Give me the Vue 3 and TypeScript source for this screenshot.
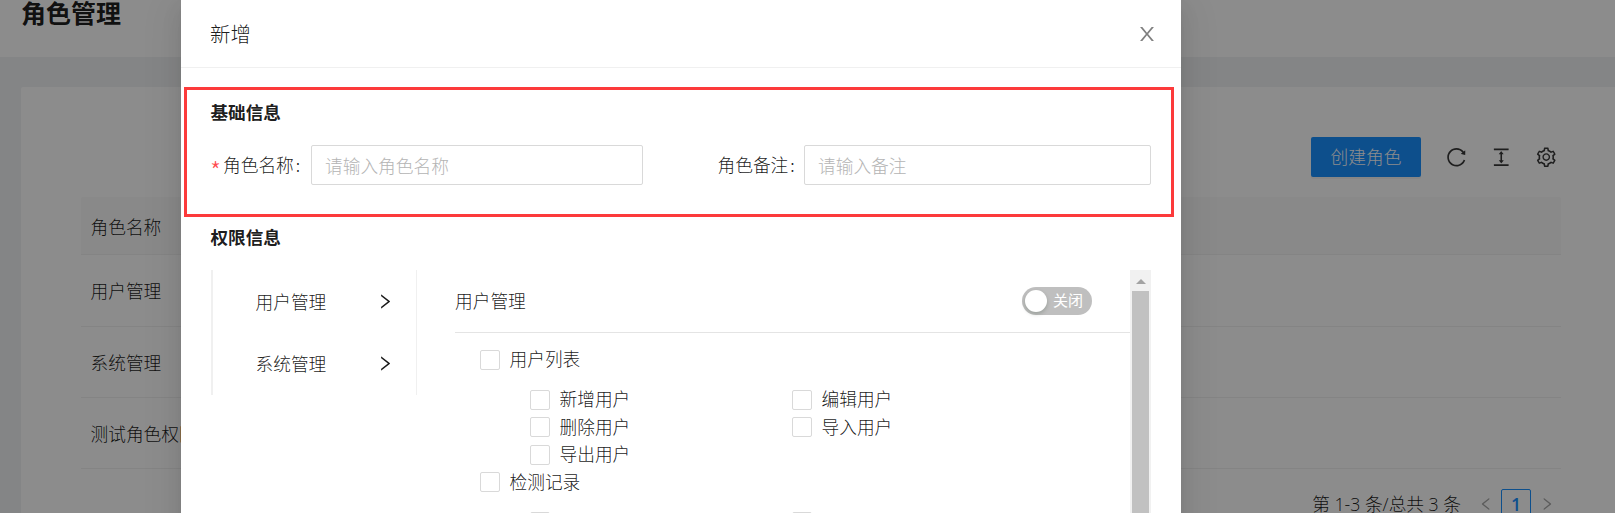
<script setup lang="ts">
import { ref } from 'vue'

interface Permission {
  name: string
  children: string[]
}

const roles = ['用户管理', '系统管理', '测试角色权限']
const menus = ['用户管理', '系统管理']
const permissions: Permission[] = [
  { name: '用户列表', children: ['新增用户', '编辑用户', '删除用户', '导入用户', '导出用户'] },
  { name: '检测记录', children: ['', ''] },
]
const roleName = ref('')
const remark = ref('')

const rightPath =
  'M765.7 486.8L314.9 134.7A7.97 7.97 0 00302 141v77.3c0 4.9 2.3 9.6 6.1 12.6l360 281.1-360 281.1c-3.9 3-6.1 7.7-6.1 12.6V883c0 6.7 7.7 10.4 12.9 6.3l450.8-352.1a31.96 31.96 0 000-50.4z'
const closePath =
  'M563.8 512l262.5-312.9c4.4-5.2.7-13.1-6.1-13.1h-79.8c-4.7 0-9.2 2.1-12.3 5.7L511.6 449.8 295.1 191.7c-3-3.6-7.5-5.7-12.3-5.7H203c-6.8 0-10.5 7.9-6.1 13.1L459.4 512 196.9 824.9A7.95 7.95 0 00203 838h79.8c4.7 0 9.2-2.1 12.3-5.7l216.5-258.1 216.5 258.1c3 3.6 7.5 5.7 12.3 5.7h79.8c6.8 0 10.5-7.9 6.1-13.1L563.8 512z'
const tools = [
  'M909.1 209.3l-56.4 44.1C775.8 155.1 656.2 92 521.9 92 290 92 102.3 279.5 102 511.5 101.7 743.7 289.8 932 521.9 932c181.3 0 335.8-115 394.6-276.1 1.5-4.2-.7-8.9-4.9-10.3l-56.7-19.5a8 8 0 00-10.1 4.8c-1.8 5-3.8 10-5.9 14.9-17.3 41-42.1 77.8-73.7 109.4A344.77 344.77 0 01655.9 829c-42.3 17.9-87.4 27-133.8 27-46.5 0-91.5-9.1-133.8-27A341.5 341.5 0 01279 755.2a342.16 342.16 0 01-73.7-109.4c-17.9-42.4-27-87.4-27-133.9s9.1-91.5 27-133.9c17.3-41 42.1-77.8 73.7-109.4 31.6-31.6 68.4-56.4 109.3-73.8 42.3-17.9 87.4-27 133.8-27 46.5 0 91.5 9.1 133.8 27a341.5 341.5 0 01109.3 73.8c9.9 9.9 19.2 20.4 27.8 31.4l-60.2 47a8 8 0 003 14.1l175.6 43c5 1.2 9.9-2.6 9.9-7.7l.8-180.9c-.1-6.6-7.8-10.3-13-6.2z',
  'M840 836H184c-4.4 0-8 3.6-8 8v60c0 4.4 3.6 8 8 8h656c4.4 0 8-3.6 8-8v-60c0-4.4-3.6-8-8-8zm0-724H184c-4.4 0-8 3.6-8 8v60c0 4.4 3.6 8 8 8h656c4.4 0 8-3.6 8-8v-60c0-4.4-3.6-8-8-8zM610.8 378c6 0 9.4-7 5.7-11.7L515.7 238.7a7.14 7.14 0 00-11.3 0L403.6 366.3a7.23 7.23 0 005.7 11.7H476v268h-62.8c-6 0-9.4 7-5.7 11.7l100.8 127.5c2.9 3.7 8.5 3.7 11.3 0l100.8-127.5c3.7-4.7.4-11.7-5.7-11.7H548V378h62.8z',
  'M924.8 625.7l-65.5-56c3.1-19 4.7-38.4 4.7-57.8s-1.6-38.8-4.7-57.8l65.5-56a32.03 32.03 0 009.3-35.2l-.9-2.6a443.74 443.74 0 00-79.7-137.9l-1.8-2.1a32.12 32.12 0 00-35.1-9.5l-81.3 28.9c-30-24.6-63.5-44-99.7-57.6l-15.7-85a32.05 32.05 0 00-25.8-25.7l-2.7-.5c-52.1-9.4-106.9-9.4-159 0l-2.7.5a32.05 32.05 0 00-25.8 25.7l-15.8 85.4a351.86 351.86 0 00-99 57.4l-81.9-29.1a32 32 0 00-35.1 9.5l-1.8 2.1a446.02 446.02 0 00-79.7 137.9l-.9 2.6c-4.5 12.5-.8 26.5 9.3 35.2l66.3 56.6c-3.1 18.8-4.6 38-4.6 57.1 0 19.2 1.5 38.4 4.6 57.1L99 625.5a32.03 32.03 0 00-9.3 35.2l.9 2.6c18.1 50.4 44.9 96.9 79.7 137.9l1.8 2.1a32.12 32.12 0 0035.1 9.5l81.9-29.1c29.8 24.5 63.1 43.9 99 57.4l15.8 85.4a32.05 32.05 0 0025.8 25.7l2.7.5a449.4 449.4 0 00159 0l2.7-.5a32.05 32.05 0 0025.8-25.7l15.7-85a350 350 0 0099.7-57.6l81.3 28.9a32 32 0 0035.1-9.5l1.8-2.1c34.8-41.1 61.6-87.5 79.7-137.9l.9-2.6c4.5-12.3.8-26.3-9.3-35zM788.3 465.9c2.5 15.1 3.8 30.6 3.8 46.1s-1.3 31-3.8 46.1l-6.6 40.1 74.7 63.9a370.03 370.03 0 01-42.6 73.6L721 702.8l-31.4 25.8c-23.9 19.6-50.5 35-79.3 45.8l-38.1 14.3-17.9 97a377.5 377.5 0 01-85 0l-17.9-97.2-37.8-14.5c-28.5-10.8-55-26.2-78.7-45.7l-31.4-25.9-93.4 33.2c-17-22.9-31.2-47.6-42.6-73.6l75.5-64.5-6.5-40c-2.4-14.9-3.7-30.3-3.7-45.5 0-15.3 1.2-30.6 3.7-45.5l6.5-40-75.5-64.5c11.3-26.1 25.6-50.7 42.6-73.6l93.4 33.2 31.4-25.9c23.7-19.5 50.2-34.9 78.7-45.7l37.9-14.3 17.9-97.2c28.1-3.2 56.8-3.2 85 0l17.9 97 38.1 14.3c28.7 10.8 55.4 26.2 79.3 45.8l31.4 25.8 92.8-32.9c17 22.9 31.2 47.6 42.6 73.6L781.8 426l6.5 39.9zM512 326c-97.2 0-176 78.8-176 176s78.8 176 176 176 176-78.8 176-176-78.8-176-176-176zm79.2 255.2A111.6 111.6 0 01512 614c-29.9 0-58-11.7-79.2-32.8A111.6 111.6 0 01400 502c0-29.9 11.7-58 32.8-79.2C454 401.6 482.1 390 512 390c29.9 0 58 11.6 79.2 32.8A111.6 111.6 0 01624 502c0 29.9-11.7 58-32.8 79.2z',
]
</script>

<template>
  <div class="page">
    <header class="page-header"><h1>角色管理</h1></header>
    <main class="card">
      <div class="toolbar">
        <button class="primary">创建角色</button>
        <svg v-for="(d, i) in tools" :key="i" class="tool" viewBox="0 0 1024 1024"><path :d="d" /></svg>
      </div>
      <div class="table">
        <div class="thead">角色名称</div>
        <div v-for="role in roles" :key="role" class="row">{{ role }}</div>
      </div>
      <div class="pagination">
        <span>第 1-3 条/总共 3 条</span>
        <svg class="prev" viewBox="0 0 1024 1024"><path :d="rightPath" /></svg>
        <span class="current">1</span>
        <svg class="next" viewBox="0 0 1024 1024"><path :d="rightPath" /></svg>
      </div>
    </main>

    <div class="mask">
      <section class="modal">
        <header class="modal-header">
          <span>新增</span>
          <svg class="close" viewBox="0 0 1024 1024"><path :d="closePath" /></svg>
        </header>
        <div class="modal-body">
          <h3>基础信息</h3>
          <div class="form">
            <label class="required"><b class="star">*</b>角色名称<i class="colon">:</i></label>
            <input v-model="roleName" class="name-input" placeholder="请输入角色名称" />
            <label class="remark-label">角色备注<i class="colon">:</i></label>
            <input v-model="remark" class="remark-input" placeholder="请输入备注" />
          </div>
          <h3 class="second">权限信息</h3>
          <div class="permissions">
            <nav class="menu">
              <div v-for="menu in menus" :key="menu" class="menu-item">
                <span>{{ menu }}</span>
                <svg viewBox="0 0 1024 1024"><path :d="rightPath" /></svg>
              </div>
            </nav>
            <div class="detail">
              <div class="detail-header">
                <span>用户管理</span>
                <div class="switch"><i class="knob"></i><span>关闭</span></div>
              </div>
              <div v-for="item in permissions" :key="item.name" class="group">
                <div class="check"><i class="box"></i><span>{{ item.name }}</span></div>
                <div class="children">
                  <div v-for="(child, i) in item.children" :key="i" class="check">
                    <i class="box"></i><span>{{ child }}</span>
                  </div>
                </div>
              </div>
            </div>
            <div class="scrollbar">
              <div class="scroll-up"><i></i></div>
              <div class="thumb"></div>
            </div>
          </div>
        </div>
        <div class="highlight"></div>
      </section>
    </div>
  </div>
</template>

<style>
body {
  margin: 0;
  overflow: hidden;
}
</style>

<style scoped>
* {
  box-sizing: border-box;
}
.page {
  position: relative;
  height: 513px;
  overflow: hidden;
  background: #f0f2f5;
  color: rgba(0, 0, 0, 0.9);
  font: 300 17.7px/27.5px 'Noto Sans CJK SC', sans-serif;
}
.page-header {
  height: 57px;
  background: #fff;
  padding-left: 21px;
}
h1 {
  margin: 0;
  font-size: 25px;
  font-weight: 700;
  line-height: 25px;
}
.card {
  margin: 30px 0 0 21px;
  height: 440px;
  padding: 50px 54px 0 60px;
  background: #fff;
  border-radius: 2px 0 0 0;
}
.toolbar {
  display: flex;
  align-items: center;
  justify-content: flex-end;
  height: 40px;
  padding-right: 4px;
}
.primary {
  width: 110px;
  height: 40px;
  padding: 0;
  border: 0;
  border-radius: 2px;
  background: #1890ff;
  color: #fff;
  font: inherit;
  box-shadow: 0 2px 0 rgba(0, 0, 0, 0.045);
}
.tool {
  width: 22.5px;
  height: 22.5px;
  margin-left: 22.5px;
  color: rgba(0, 0, 0, 0.78);
}
.primary + .tool {
  margin-left: 23.5px;
}
svg {
  display: block;
  flex: none;
  fill: currentColor;
}
.table {
  margin-top: 20px;
}
.thead,
.row {
  height: 71px;
  padding-left: 9.5px;
  line-height: 70px;
  border-bottom: 1px solid #f0f0f0;
}
.thead {
  height: 58px;
  line-height: 58px;
  background: #fafafa;
  border-radius: 2px 2px 0 0;
}
.row:nth-child(2) {
  height: 72px;
  line-height: 71px;
}
.pagination {
  display: flex;
  align-items: center;
  justify-content: flex-end;
  height: 30px;
  margin-top: 20px;
  padding-right: 5px;
  font-family: 'Open Sans', 'Noto Sans CJK SC', sans-serif;
}
.pagination > span:first-child {
  padding-top: 1px;
}
.pagination svg {
  width: 18px;
  height: 16px;
  color: rgba(0, 0, 0, 0.35);
}
.prev {
  margin: 0 6px 0 16px;
  transform: scaleX(-1);
}
.next {
  margin-left: 7px;
}
.current {
  width: 30px;
  height: 30px;
  border: 1px solid #1890ff;
  border-radius: 2px;
  color: #1890ff;
  font-weight: 600;
  line-height: 29px;
  text-align: center;
}
.mask {
  position: absolute;
  inset: 0;
  background: rgba(0, 0, 0, 0.45);
}
.modal {
  position: relative;
  width: 1000px;
  height: 600px;
  margin-left: 181px;
  background: #fff;
  box-shadow: 0 4px 8px -5px rgba(0, 0, 0, 0.12), 0 8px 20px 0 rgba(0, 0, 0, 0.08),
    0 11px 35px 10px rgba(0, 0, 0, 0.05);
}
.modal-header {
  display: flex;
  align-items: center;
  justify-content: space-between;
  height: 68px;
  padding: 0 23px 0 29px;
  border-bottom: 1px solid #f0f0f0;
  font-size: 20.4px;
}
.close {
  width: 22px;
  height: 22px;
  color: rgba(0, 0, 0, 0.5);
}
.modal-body {
  padding: 29px 30px 0;
}
h3 {
  margin: 0 0 0 -0.5px;
  font-size: 17.6px;
  font-weight: 700;
  line-height: 30px;
}
.second {
  margin-top: 37px;
}
.form {
  display: flex;
  align-items: center;
  height: 40px;
  margin-top: 18px;
}
.required {
  display: flex;
  width: 100px;
  height: 27.5px;
}
.star {
  width: 13px;
  margin-left: -1px;
  padding: 6px 0 0;
  color: #ff4d4f;
  font-size: 25px;
  font-weight: 300;
}
.colon {
  margin-left: 2px;
  font-style: normal;
}
.remark-label {
  width: 86.5px;
  margin-left: 74.5px;
}
input {
  height: 40px;
  padding: 0 13px;
  border: 1px solid #d9d9d9;
  border-radius: 2px;
  background: #fff;
  font: inherit;
  outline: none;
}
input::placeholder {
  color: #b4b4b4;
}
.name-input {
  width: 332px;
}
.remark-input {
  width: 347px;
}
.permissions {
  display: flex;
  align-items: flex-start;
  margin-top: 18px;
}
.menu {
  width: 206px;
  border-left: 2px solid #f0f0f0;
  border-right: 1px solid #f0f0f0;
}
.menu-item {
  display: flex;
  align-items: center;
  justify-content: space-between;
  height: 62.5px;
  padding: 0 20.5px 0 42.5px;
}
.menu-item svg {
  width: 22px;
  height: 19px;
}
.detail {
  flex: 1;
  height: 330px;
  margin-left: 38px;
}
.detail-header {
  display: flex;
  align-items: center;
  justify-content: space-between;
  height: 63px;
  padding-right: 38px;
  border-bottom: 1px solid #e4e4e4;
  margin-bottom: 13px;
}
.switch {
  display: flex;
  align-items: center;
  gap: 6px;
  width: 70px;
  height: 28px;
  padding-left: 3px;
  border-radius: 14px;
  background: #bfbfbf;
  color: #fff;
  font-size: 15px;
  font-weight: 400;
}
.switch span {
  padding-bottom: 2px;
}
.knob {
  width: 22px;
  height: 22px;
  border-radius: 50%;
  background: #fff;
  box-shadow: 0 2px 4px rgba(0, 35, 11, 0.2);
}
.group {
  padding-left: 25px;
}
.check {
  display: flex;
  align-items: center;
  gap: 9.5px;
  height: 27.5px;
}
.check span {
  padding-bottom: 2px;
}
.box {
  width: 20px;
  height: 20px;
  border: 1px solid #d9d9d9;
  border-radius: 2px;
}
.children {
  display: grid;
  grid-template-columns: 262px 262px;
  padding: 12.5px 0 0 50px;
}
.scrollbar {
  width: 21px;
  height: 330px;
  padding: 0 2px;
  background: #f1f1f1;
}
.scroll-up {
  display: flex;
  align-items: center;
  justify-content: center;
  height: 21px;
  padding-top: 2px;
}
.scroll-up i {
  border: 5px solid transparent;
  border-top: 0;
  border-bottom-color: #a3a3a3;
}
.thumb {
  height: 309px;
  background: #c1c1c1;
}
.highlight {
  position: absolute;
  top: 87px;
  left: 3px;
  width: 990px;
  height: 130px;
  border: 3px solid #fc3a3b;
}
</style>
